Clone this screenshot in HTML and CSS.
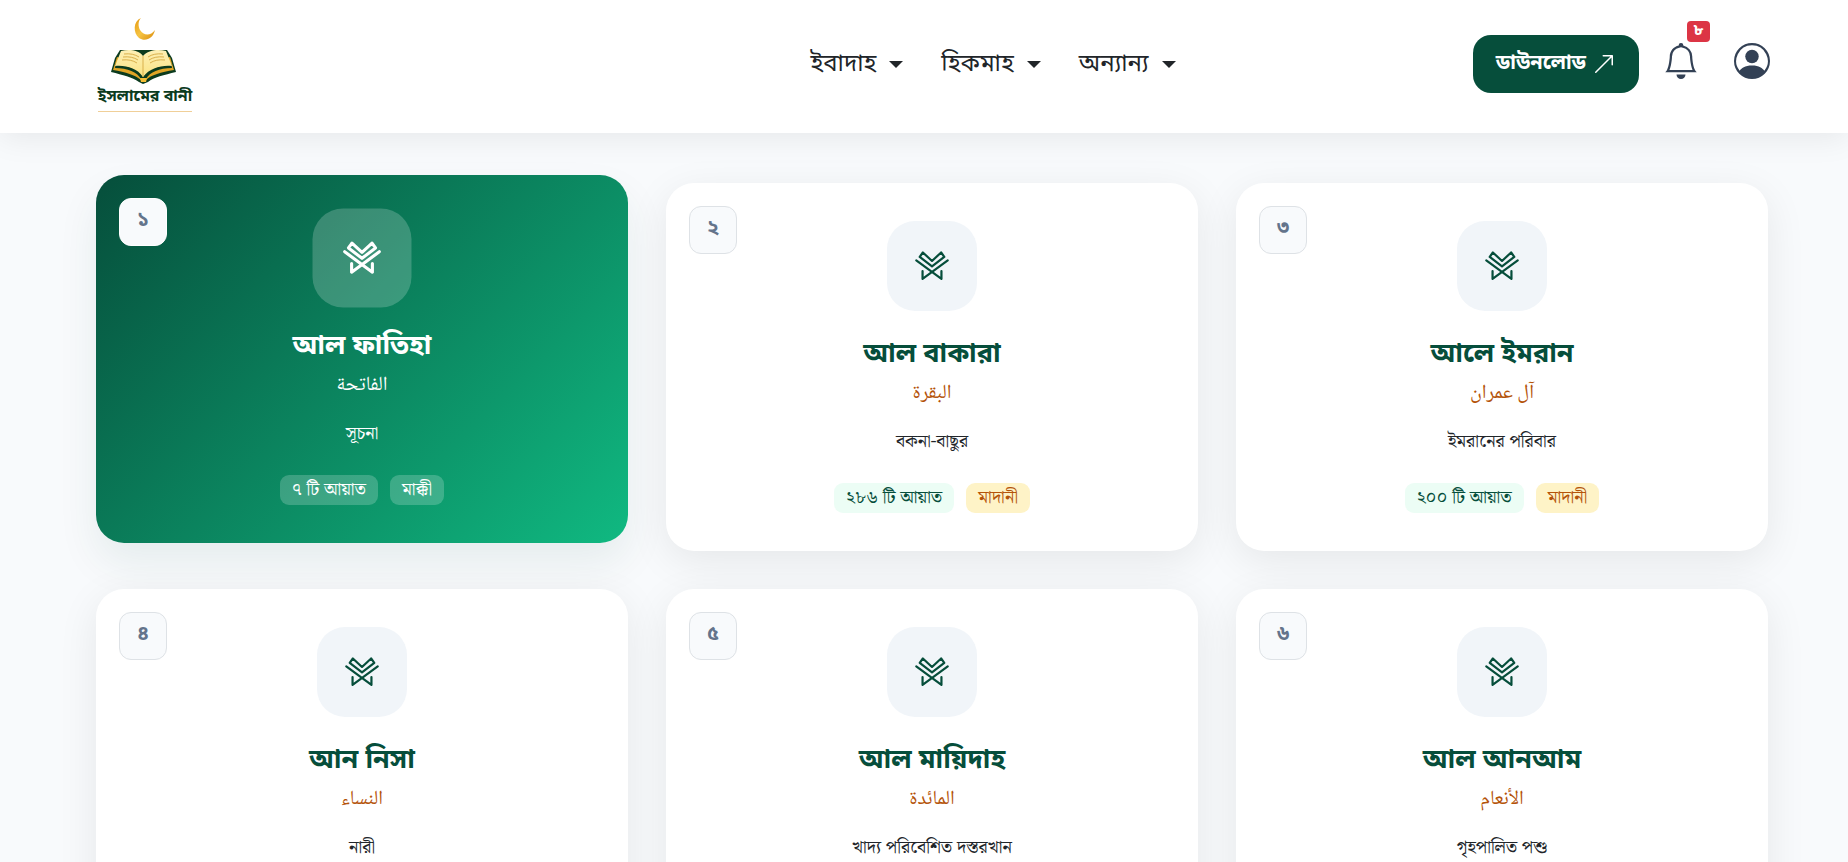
FILE: index.html
```html
<!DOCTYPE html>
<html lang="bn">
<head>
    <meta charset="UTF-8">
    <meta name="viewport" content="width=device-width, initial-scale=1">
    <title>ইসলামের বানী</title>
    <link rel="stylesheet" href="styles.css">
</head>
<body>
    <svg class="sprite" aria-hidden="true">
        <symbol id="quran" viewBox="0 2 114 108">
            <path d="M28 13 18 27 57 57 96 27 86 13 57 40Z"/>
            <path d="M7 38 87 97V72M107 38 27 97V72"/>
        </symbol>
    </svg>
    <header class="navbar">
        <a href="#" class="logo">
            <svg class="logo-mark" viewBox="0 0 96 72" aria-hidden="true">
                <defs>
                    <linearGradient id="gold" x1="0" y1="0" x2="1" y2="1">
                        <stop offset="0" stop-color="#e59a12"/>
                        <stop offset=".5" stop-color="#f6c443"/>
                        <stop offset="1" stop-color="#d98a0a"/>
                    </linearGradient>
                    <linearGradient id="page" x1="0" y1="0" x2="0" y2="1">
                        <stop offset="0" stop-color="#fdf0b4"/>
                        <stop offset="1" stop-color="#fbe384"/>
                    </linearGradient>
                </defs>
                <path fill="url(#gold)" d="M44 3C36 6 36 18 42 23 48 27 56 24 58 15 53 22 46 20 43 15 41 11 41 6 44 3Z"/>
                <path fill="#0b3b1e" d="M23 35 18 43 14 57C26 60 35 62 42 67L46 69 51 67C57 62 67 60 79 57L75 43 70 35Z"/>
                <path fill="#e0a526" d="M20 42 16 55C29 57 38 60 44 65H49C54 60 64 57 77 55L73 42 46 50Z"/>
                <path fill="#0b3b1e" d="M19 48 18 53C31 53 40 57 44 64H49C53 57 62 53 75 53L74 48 46 56Z"/>
                <path fill="url(#page)" d="M24 36C32 34 42 35 46 41 51 35 61 34 69 36L75 51C64 50 53 53 46 62 40 53 29 50 18 51Z"/>
                <path fill="none" stroke="#d9b04c" stroke-width="1" d="M46 41V62M27 39Q36 38 42 42M26 42Q35 41 41 45M25 45Q34 44 40 48M66 39Q57 38 51 42M67 42Q58 41 52 45M68 45Q59 44 53 48"/>
                <path fill="#f3bd35" d="M43 63H50L49 67H44Z"/>
            </svg>
            <span class="logo-text">ইসলামের বানী</span>
        </a>
        <nav class="menu">
            <button type="button" class="menu-link">ইবাদাহ</button>
            <button type="button" class="menu-link">হিকমাহ</button>
            <button type="button" class="menu-link">অন্যান্য</button>
        </nav>
        <div class="actions">
            <a href="#" class="download">ডাউনলোড
                <svg viewBox="0 0 16 16" aria-hidden="true"><path d="M14 2.5a.5.5 0 0 0-.5-.5h-6a.5.5 0 0 0 0 1h4.793L2.146 13.146a.5.5 0 0 0 .708.708L13 3.707V8.5a.5.5 0 0 0 1 0z"/></svg>
            </a>
            <button type="button" class="icon-btn" aria-label="Notifications">
                <svg viewBox="0 0 16 16" aria-hidden="true"><path d="M8 16a2 2 0 0 0 2-2H6a2 2 0 0 0 2 2M8 1.918l-.797.161A4 4 0 0 0 4 6c0 .628-.134 2.197-.459 3.742-.16.767-.376 1.566-.663 2.258h10.244c-.287-.692-.502-1.49-.663-2.258C12.134 8.197 12 6.628 12 6a4 4 0 0 0-3.203-3.92zM14.22 12c.223.447.481.801.78 1H1c.299-.199.557-.553.78-1C2.68 10.2 3 6.88 3 6c0-2.42 1.72-4.44 4.005-4.901a1 1 0 1 1 1.99 0A5 5 0 0 1 13 6c0 .88.32 4.2 1.22 6"/></svg>
                <span class="count">৮</span>
            </button>
            <button type="button" class="icon-btn" aria-label="Account">
                <svg viewBox="0 0 16 16" aria-hidden="true"><path d="M11 6a3 3 0 1 1-6 0 3 3 0 0 1 6 0"/><path fill-rule="evenodd" d="M0 8a8 8 0 1 1 16 0A8 8 0 0 1 0 8m8-7a7 7 0 0 0-5.468 11.37C3.242 11.226 4.805 10 8 10s4.757 1.225 5.468 2.37A7 7 0 0 0 8 1"/></svg>
            </button>
        </div>
    </header>

    <main class="surah-list">
        <a href="#" class="card active">
            <span class="number">১</span>
            <span class="icon"><svg aria-hidden="true"><use href="#quran"/></svg></span>
            <h2 class="name">আল ফাতিহা</h2>
            <p class="arabic" lang="ar" dir="rtl">الفاتحة</p>
            <p class="meaning">সূচনা</p>
            <div class="tags">
                <span class="tag">৭ টি আয়াত</span>
                <span class="tag place">মাক্কী</span>
            </div>
        </a>
        <a href="#" class="card">
            <span class="number">২</span>
            <span class="icon"><svg aria-hidden="true"><use href="#quran"/></svg></span>
            <h2 class="name">আল বাকারা</h2>
            <p class="arabic" lang="ar" dir="rtl">البقرة</p>
            <p class="meaning">বকনা-বাছুর</p>
            <div class="tags">
                <span class="tag">২৮৬ টি আয়াত</span>
                <span class="tag place">মাদানী</span>
            </div>
        </a>
        <a href="#" class="card">
            <span class="number">৩</span>
            <span class="icon"><svg aria-hidden="true"><use href="#quran"/></svg></span>
            <h2 class="name">আলে ইমরান</h2>
            <p class="arabic" lang="ar" dir="rtl">آل عمران</p>
            <p class="meaning">ইমরানের পরিবার</p>
            <div class="tags">
                <span class="tag">২০০ টি আয়াত</span>
                <span class="tag place">মাদানী</span>
            </div>
        </a>
        <a href="#" class="card">
            <span class="number">৪</span>
            <span class="icon"><svg aria-hidden="true"><use href="#quran"/></svg></span>
            <h2 class="name">আন নিসা</h2>
            <p class="arabic" lang="ar" dir="rtl">النساء</p>
            <p class="meaning">নারী</p>
        </a>
        <a href="#" class="card">
            <span class="number">৫</span>
            <span class="icon"><svg aria-hidden="true"><use href="#quran"/></svg></span>
            <h2 class="name">আল মায়িদাহ</h2>
            <p class="arabic" lang="ar" dir="rtl">المائدة</p>
            <p class="meaning">খাদ্য পরিবেশিত দস্তরখান</p>
        </a>
        <a href="#" class="card">
            <span class="number">৬</span>
            <span class="icon"><svg aria-hidden="true"><use href="#quran"/></svg></span>
            <h2 class="name">আল আনআম</h2>
            <p class="arabic" lang="ar" dir="rtl">الأنعام</p>
            <p class="meaning">গৃহপালিত পশু</p>
        </a>
    </main>
</body>
</html>
```
FILE: styles.css
```css
*{
    margin: 0;
    padding: 0;
    box-sizing: border-box;
}
body{
    background: #f8fafc;
    color: #212529;
    font-family: "Noto Sans Bengali", "Noto Sans", sans-serif;
    font-size: 18px;
}
a{
    color: inherit;
    text-decoration: none;
}
button{
    border: 0;
    background: none;
    color: inherit;
    font: inherit;
    cursor: pointer;
}
.sprite{
    display: none;
}

.navbar{
    display: grid;
    grid-template-columns: 6fr auto 5fr;
    align-items: center;
    min-height: 133px;
    padding: 0 78px 6px 97px;
    background: #fff;
    box-shadow: 0 4px 30px rgba(0,0,0,.08);
}
.logo{
    justify-self: start;
    display: flex;
    flex-direction: column;
    align-items: center;
}
.logo-mark{
    width: 96px;
    height: 72px;
}
.logo-text{
    padding-bottom: 4px;
    border-bottom: 1px solid #f0cf98;
    color: #0b3b1e;
    font-size: 16px;
    font-weight: 700;
    line-height: 20px;
    white-space: nowrap;
}
.menu{
    display: flex;
    gap: 38px;
    padding-top: 2px;
}
.menu-link{
    display: flex;
    align-items: center;
    gap: 13px;
    font-size: 24px;
    line-height: 36px;
}
.menu-link::after{
    content: "";
    border: 7px solid transparent;
    border-top-color: #212529;
    border-bottom: 0;
}
.actions{
    justify-self: end;
    display: flex;
    align-items: center;
    gap: 24px;
}
.download{
    display: flex;
    align-items: center;
    gap: 6px;
    height: 58px;
    padding: 0 23px;
    border-radius: 18px;
    background: #064e3b;
    color: #fff;
    font-size: 20px;
    font-weight: 700;
}
.download svg{
    width: 24px;
    height: 24px;
    fill: currentColor;
}
.icon-btn{
    position: relative;
    display: flex;
    padding-bottom: 5px;
    color: #334155;
}
.icon-btn + .icon-btn{
    margin-left: 11px;
}
.icon-btn svg{
    width: 36px;
    height: 36px;
    fill: currentColor;
}
.count{
    position: absolute;
    top: -22px;
    left: 24px;
    width: 23px;
    border-radius: 4px;
    background: #dc3545;
    color: #fff;
    font-size: 16px;
    font-weight: 700;
    line-height: 21px;
}

.surah-list{
    display: grid;
    grid-template-columns: repeat(3, 1fr);
    gap: 38px;
    padding: 50px 80px 0 96px;
}
.card{
    position: relative;
    display: flex;
    flex-direction: column;
    align-items: center;
    padding: 38px 24px;
    border-radius: 28px;
    background: #fff;
    box-shadow: 0 10px 40px rgba(0,0,0,.08);
}
.number{
    position: absolute;
    top: 23px;
    left: 23px;
    width: 48px;
    height: 48px;
    border: 1px solid #dee2e6;
    border-radius: 12px;
    background: #f8fafc;
    color: #64748b;
    font-size: 20px;
    font-weight: 700;
    line-height: 44px;
    text-align: center;
}
.icon{
    display: flex;
    align-items: center;
    justify-content: center;
    width: 90px;
    height: 90px;
    margin-bottom: 24px;
    border-radius: 28px;
    background: #f1f5f9;
    color: #064e3b;
}
.icon svg{
    width: 36px;
    height: 34px;
    fill: none;
    stroke: currentColor;
    stroke-width: 7;
    stroke-linecap: round;
    stroke-linejoin: round;
}
.name{
    color: #064e3b;
    font-size: 27px;
    font-weight: 700;
    line-height: 40px;
}
.arabic{
    margin-bottom: 14px;
    color: #b45309;
    font-family: "Noto Naskh Arabic", "DejaVu Sans", sans-serif;
    font-size: 20px;
    line-height: 38px;
}
.meaning,
.tag{
    font-family: "Noto Serif Bengali", "Noto Sans Bengali", "Noto Sans", sans-serif;
    font-size: 18px;
    line-height: 30px;
}
.meaning{
    margin-bottom: 26px;
}
.tags{
    display: flex;
    gap: 12px;
}
.tag{
    padding: 0 12px;
    border-radius: 9px;
    background: #ecfdf5;
    color: #064e3b;
}
.place{
    background: #fef3c7;
    color: #b45309;
}

.active{
    background: linear-gradient(135deg, #064e3b, #10b981);
    box-shadow: 0 20px 40px rgba(6,78,59,.08);
    transform: translateY(-8px);
}
.active .number{
    border-color: #fff;
}
.active .icon{
    background: rgba(255,255,255,.2);
    transform: scale(1.1);
}
.active .icon svg{
    stroke-width: 9;
}
.active .icon,
.active .name,
.active .arabic,
.active .meaning{
    color: #fff;
}
.active .tag{
    background: rgba(255,255,255,.2);
    color: #fff;
}
```
